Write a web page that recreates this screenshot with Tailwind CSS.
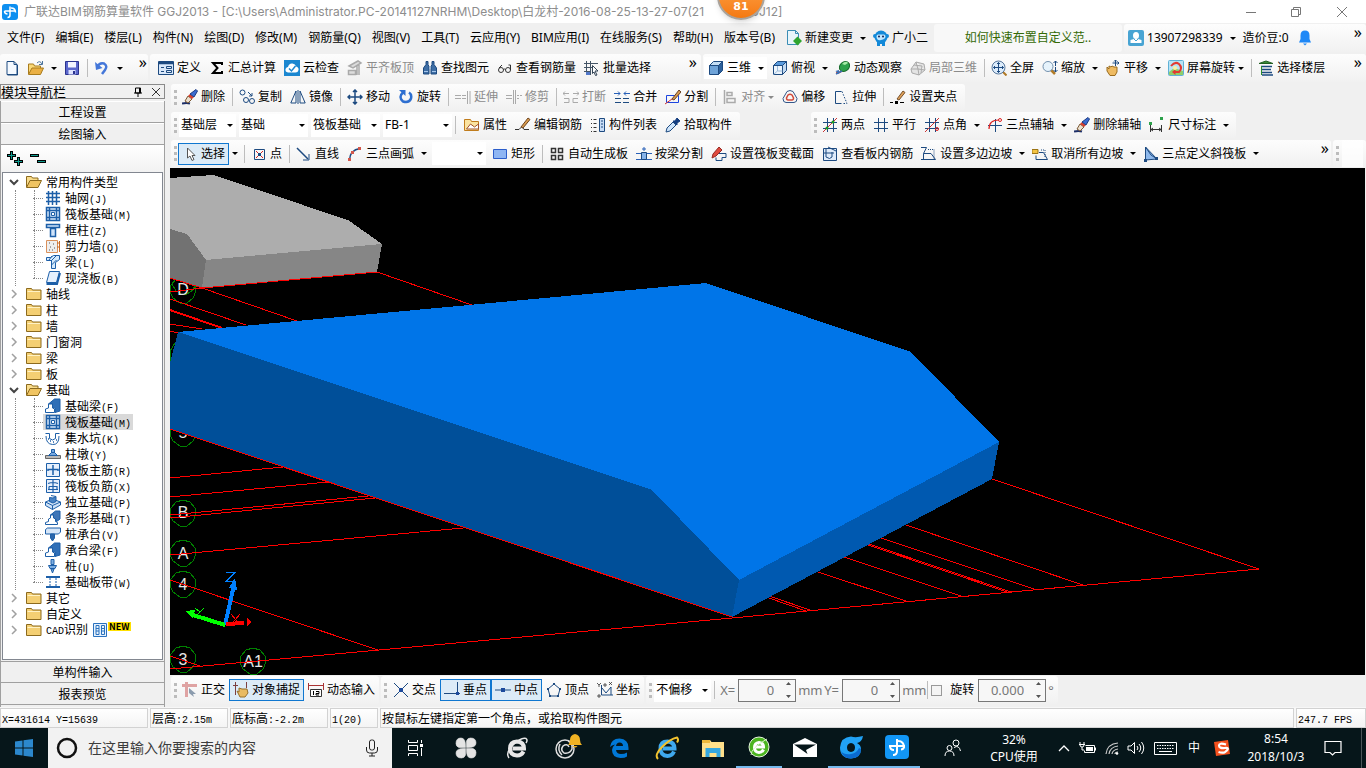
<!DOCTYPE html>
<html lang="zh-CN">
<head>
<meta charset="utf-8">
<title>广联达BIM钢筋算量软件 GGJ2013</title>
<script src="https://cdn.jsdelivr.net/npm/@tailwindcss/browser@4"></script>
</head>
<body class="flex h-screen flex-col overflow-hidden bg-[#f0f0f0] font-['Noto_Sans','Noto_Sans_CJK_SC',sans-serif] text-[12px] leading-4 text-black
 [&_svg]:shrink-0 [&_button]:whitespace-nowrap
 [&_.tb]:flex [&_.tb]:items-center [&_.tb]:rounded-[3px] [&_.tb]:bg-linear-to-b [&_.tb]:from-[#fdfdfd] [&_.tb]:to-[#f1f1f1]
 [&_.tb_button]:flex [&_.tb_button]:h-[22px] [&_.tb_button]:shrink-0 [&_.tb_button]:items-center [&_.tb_button]:gap-[3px] [&_.tb_button]:px-1
 [&_.tb_svg]:size-4 [&_.tb_svg]:fill-none [&_.tb_svg]:stroke-[#1d4a80]
 [&_.tb_i]:size-0 [&_.tb_i]:border-x-[3px] [&_.tb_i]:border-t-[3px] [&_.tb_i]:border-x-transparent [&_.tb_i]:border-t-current
 [&_.tb>hr]:mr-0.5 [&_.tb>hr]:ml-[3px] [&_.tb>hr]:h-[18px] [&_.tb>hr]:w-px [&_.tb>hr]:shrink-0 [&_.tb>hr]:border-0 [&_.tb>hr]:bg-[#bdbdbd]
 [&_.grip]:mr-px [&_.grip]:ml-[3px] [&_.grip]:h-[15px] [&_.grip]:shrink-0 [&_.grip]:border-l-[3px] [&_.grip]:border-dotted [&_.grip]:border-[#bcbcbc]
 [&_.combo]:mr-[3px] [&_.combo]:flex [&_.combo]:h-[23px] [&_.combo]:shrink-0 [&_.combo]:items-center [&_.combo]:bg-white [&_.combo]:pr-[3px]
 [&_.combo_select]:min-w-0 [&_.combo_select]:flex-1 [&_.combo_select]:appearance-none [&_.combo_select]:pl-0.5
 [&_.mono]:font-['Liberation_Mono',monospace] [&_.mono]:text-[10px]">

<!-- title bar -->
<header class="relative flex h-[23px] shrink-0 items-center bg-white pl-0.5">
  <svg viewBox="0 0 16 16" class="size-4"><rect width="16" height="16" rx="3" fill="#0d8ff0"/><path d="M8 2.500v8.500q0 2.500-2.500 2.500M2.500 7h11M9 4q4.500 0 4.500 4.500M2.500 7q0 3 3 3" fill="none" stroke="#fff" stroke-width="1.500"/></svg>
  <h1 class="ml-1.5 flex flex-1 items-center whitespace-nowrap font-['Inter','Noto_Sans_CJK_SC',sans-serif] text-[#8d8d8d]"><span class="w-[692px] shrink-0 overflow-hidden">广联达BIM钢筋算量软件 GGJ2013 - [C:\Users\Administrator.PC-20141127NRHM\Desktop\白龙村-2016-08-25-13-27-07(21</span><span class="ml-auto w-[488px] shrink"><span class="pl-px">GGJ12]</span></span></h1>
  <div class="absolute -top-7 left-[717px] flex size-12 items-end justify-center rounded-full border-2 border-[#a9a39c] bg-linear-to-b from-[#ffab4a] to-[#f5790f] pb-[3px] font-['DejaVu_Sans'] text-[11px] font-bold text-white shadow-md">81</div>
  <div class="flex [&_svg]:size-3 [&_svg]:fill-none [&_svg]:stroke-[#777]">
    <button aria-label="最小化" class="flex h-5 w-[45px] items-center justify-center"><svg viewBox="0 0 12 12"><path d="M1 6.500h10"/></svg></button>
    <button aria-label="还原" class="flex h-5 w-[45px] items-center justify-center"><svg viewBox="0 0 12 12"><path d="M1.500 3.500h7v7h-7zM3.500 3.500v-2h7v7h-2"/></svg></button>
    <button aria-label="关闭" class="flex h-5 w-[48px] items-center justify-center"><svg viewBox="0 0 12 12"><path d="M1 1l10 10M11 1L1 11"/></svg></button>
  </div>
</header>

<!-- menu bar -->
<div class="flex h-[30px] shrink-0 gap-0.5 py-px">
  <nav class="flex items-center gap-[11px] pl-[7px] whitespace-nowrap">
    <button>文件(F)</button><button>编辑(E)</button><button>楼层(L)</button><button>构件(N)</button><button>绘图(D)</button><button>修改(M)</button><button>钢筋量(Q)</button><button>视图(V)</button><button>工具(T)</button><button>云应用(Y)</button><button>BIM应用(I)</button><button>在线服务(S)</button><button>帮助(H)</button><button>版本号(B)</button>
    <button class="flex items-center gap-[3px]"><svg viewBox="0 0 16 16" class="size-4"><path d="M1.500.5h8l3 3v11h-11z" fill="#e8f5fb" stroke="#3a8db5"/><path d="M9.500.5v3h3" fill="none" stroke="#3a8db5"/><path d="M11.500 6.500L16 11l-4.500 4.500L7 11z" fill="#2fa52f"/></svg>新建变更<span class="ml-1 size-0 border-x-[3px] border-t-[3px] border-x-transparent border-t-black"></span></button>
    <button class="-ml-1 flex items-center gap-[3px]"><svg viewBox="0 0 16 16" class="size-4"><circle cx="8" cy="7" r="6.500" fill="#1389d8"/><circle cx="2" cy="6" r="2" fill="#1389d8"/><circle cx="14" cy="6" r="2" fill="#1389d8"/><path d="M4 11h8v5H9v-2H7v2H4z" fill="#1389d8"/><path d="M3.500 6.500q0-2.500 2.500-2h4q2.500-.5 2.500 2t-4.500 3.500-4.500-3.500z" fill="#bfe6ff"/><circle cx="6" cy="6.500" r="1" fill="#125"/><circle cx="10" cy="6.500" r="1" fill="#125"/></svg>广小二</button>
  </nav>
  <a href="#" class="ml-1 flex w-[188px] shrink-0 items-center justify-center rounded-[3px] bg-[#f8f8f8] text-[#356a06]">如何快速布置自定义范..</a>
  <div class="tb min-w-0 flex-1">
    <button><svg viewBox="0 0 16 16"><rect width="16" height="16" rx="2" fill="#48a4d3" stroke="none"/><ellipse cx="8" cy="5.500" rx="3" ry="3.500" fill="#fff" stroke="none"/><path d="M2.500 13v-3L6 9h4l3.500 1v3z" fill="#fff" stroke="none"/><path d="M6 9l2 2 2-2" stroke="#48a4d3"/></svg>13907298339</button>
    <button class="w-3 justify-center px-0!" aria-label="账户菜单"><i></i></button>
    <button>造价豆:0</button>
    <button aria-label="通知"><svg viewBox="0 0 16 16"><path d="M8 .5q-4.500 0-4.500 5V9L2 12.500h12L12.500 9V5.500q0-5-4.500-5zM6 13.500h4L8 15.500z" fill="#1e88f7" stroke="none"/></svg></button>
    <button class="ml-auto pb-3! text-[16px]">»</button>
  </div>
</div>

<!-- main toolbar -->
<div class="flex h-[31px] shrink-0 gap-0.5 pt-px pb-0.5">
  <div class="tb w-[148px] shrink-0">
    <button class="w-6" aria-label="新建"><svg viewBox="0 0 16 16"><path d="M3 1.500h7l3 3v10H3z" fill="#f4f9ff"/><path d="M10 1.500v3h3M13.500 5v10H3.500"/></svg></button>
    <button class="w-6" aria-label="打开"><svg viewBox="0 0 16 16"><path d="M.5 14V4h5l1 2h6v2" fill="#f9d878" stroke="#a87b1c"/><path d="M.5 14.500L4 8h11.500l-3 6.500z" fill="#eab044" stroke="#a87b1c"/><path d="M9 3q3-3 5 1m.5-3v3.500H11" stroke="#4a739c"/></svg></button>
    <button class="w-3 justify-center px-0!" aria-label="打开菜单"><i></i></button>
    <button class="w-6" aria-label="保存"><svg viewBox="0 0 16 16"><path d="M1.500 1.500h13v13h-13z" fill="#5b67cc" stroke="#2b338f"/><path d="M4 2h8v5.500H4z" fill="#f3f5ff" stroke="none"/><path d="M4.500 10h7v4.500h-7z" fill="#dfe4ff" stroke="none"/><path d="M9 11h2v3H9z" fill="#2b338f" stroke="none"/></svg></button>
    <hr>
    <button class="w-6" aria-label="撤销"><svg viewBox="0 0 16 16"><path d="M3 7q3-5 7-3.500 4 2.500 1 6.500l-3 4" stroke="#4477d9" stroke-width="2.500"/><path d="M1 2l1 8 6.500-2z" fill="#4477d9" stroke="none"/></svg></button>
    <button class="w-3 justify-center px-0!" aria-label="撤销菜单"><i></i></button>
    <button class="ml-auto px-px! pb-3! text-[16px]">»</button>
  </div>
  <div class="tb w-[551px] shrink-0 pl-1">
    <button><svg viewBox="0 0 16 16"><path d="M.5 1.500h15v13H.5z" fill="#d9e8fa"/><path d="M1 3h14" stroke-width="2.500"/><path d="M3 7.500h3M3 11.500h3M8.500 6.500h5v2h-5zM8.500 10.500h5v2h-5z"/></svg>定义</button>
    <button><svg viewBox="0 0 16 16"><path d="M13 5V3H4l4.500 5L4 13h9v-2" stroke="#000" stroke-width="2"/></svg>汇总计算</button>
    <button><svg viewBox="0 0 16 16"><rect width="16" height="16" fill="#1b87d0" stroke="none"/><path d="M4 12.500q-3-.5-2.500-3.500 1-2 2.500-2 1-4 4.500-3.500 3 .5 3.500 3 3 1 2.500 3.500t-3 2.500z" fill="#fff" stroke="none"/><path d="M5 8.500l2.500 2.500L11.500 6" stroke="#1b87d0" stroke-width="1.500"/></svg>云检查</button>
    <button class="text-[#8b8b8b]"><svg viewBox="0 0 16 16"><path d="M2 6l9-5 3 2-8 5zM1.500 10.500h7v4h-7zM10 5v10M12 5v10" stroke="#aaa" fill="#ddd" stroke-width="1.500"/></svg>平齐板顶</button>
    <button><svg viewBox="0 0 16 16"><path d="M4 1.500h2v3l1 2V14H1.500V8L4 4.500zM10 1.500h2v3L14.500 8v6H9V6.500l1-2z" fill="#3e6ea5"/><path d="M7 8h2M2 11.500h4M10 11.500h4" stroke="#a7c7ec"/></svg>查找图元</button>
    <button><svg viewBox="0 0 16 16"><circle cx="4" cy="10" r="2.500" stroke="#333"/><circle cx="11" cy="10" r="2.500" stroke="#333"/><path d="M6.500 9.500q1-1 2 0M2 8l3-3M13.500 10V5h-2" stroke="#333"/></svg>查看钢筋量</button>
    <button><svg viewBox="0 0 16 16"><path d="M2.500 1v14M6.500 1v14M0 3.500h14M0 7.500h8M0 11.500h7" stroke="#456"/><path d="M8.500 5.500l5.500 5.500h-3l2 4-1.500.5L10 12l-1.500 1.500z" fill="#fff" stroke="#345"/><path d="M2 12h4v3H2z" fill="#5177c8" stroke="none"/></svg>批量选择</button>
    <button class="ml-auto pb-3! text-[16px]">»</button>
  </div>
  <div class="tb min-w-0 flex-1 pl-px">
    <span class="mr-px flex bg-white"><button><svg viewBox="0 0 16 16"><path d="M1.500 5.500h9v9h-9z" fill="#6ea3d8"/><path d="M1.500 5.500l4-4h9l-4 4z" fill="#c4def5"/><path d="M10.500 5.500l4-4v9l-4 4z" fill="#2d619c"/></svg>三维</button><button class="w-3 justify-center px-0!" aria-label="三维菜单"><i></i></button></span>
    <button><svg viewBox="0 0 16 16"><path d="M1.500 5.500h9v9h-9z" fill="#edf5fd"/><path d="M1.500 5.500l4-4h9l-4 4z" fill="#5a9bdc"/><path d="M10.500 5.500l4-4v9l-4 4z" fill="#c2daf2"/><path d="M5.500 6v5h5m-5 0l-4 3.500" stroke="#9bbad9"/></svg>俯视</button><button class="w-3 justify-center px-0!" aria-label="俯视菜单"><i></i></button>
    <button><svg viewBox="0 0 16 16"><path d="M1 13q7 0 13-10" stroke="#c43b2b" stroke-width="1.500"/><ellipse cx="9.500" cy="6.500" rx="5.500" ry="4.500" transform="rotate(-40 9.500 6.500)" fill="#2da14b" stroke="#176b2c"/><path d="M7 4q4-4 6-1l-3 2z" fill="#a5eaa6" stroke="none"/><path d="M1 14l6-3" stroke="#3b6fb5" stroke-width="1.500"/><path d="M.5 11l3.500-1v4z" fill="#3b6fb5" stroke="none"/></svg>动态观察</button>
    <button class="text-[#8b8b8b]"><svg viewBox="0 0 16 16"><path d="M1 9l5-7 8 2 1 6-6 5-7-2zM6 2l2 7 7 1M8 9l1 6M1 9h7M4 5l8 1-1 7" fill="#e4e4e4" stroke="#aaa"/></svg>局部三维</button>
    <hr>
    <button><svg viewBox="0 0 16 16"><path d="M12 12l3.500 3.500" stroke="#b07a28" stroke-width="2"/><circle cx="7.500" cy="7.500" r="6.500" fill="#dcecfb" stroke="#57779c"/><path d="M7.500 2.500v10M2.500 7.500h10M6 4l1.500-1.500L9 4M6 11l1.500 1.500L9 11M4 6L2.500 7.500 4 9M11 6l1.500 1.500L11 9"/></svg>全屏</button>
    <button><svg viewBox="0 0 16 16"><path d="M9 10l4 4" stroke="#b07a28" stroke-width="2.500"/><circle cx="6" cy="6.500" r="5" fill="#e6f3fc" stroke="#7391ae"/><path d="M13.500 1v5M11.500 3l2-2 2 2M13.500 7v5M11.500 10l2 2 2-2"/></svg>缩放</button><button class="w-3 justify-center px-0!" aria-label="缩放菜单"><i></i></button>
    <button><svg viewBox="0 0 16 16"><path d="M2 7l2 2V6l2 1 1-1 2 1h3v5l-2 3.500H5L2 11z" fill="#efbb62" stroke="#9a6c1f"/><path d="M10.500 0v6M7.500 3h6M9 1.500L10.500 0 12 1.500M12.500 1.500L14 3l-1.500 1.500"/></svg>平移</button><button class="w-3 justify-center px-0!" aria-label="平移菜单"><i></i></button>
    <button><svg viewBox="0 0 16 16"><rect x=".5" y=".5" width="15" height="15" rx="1" fill="#b9e3f5" stroke="#5fb1d6"/><path d="M1 12l5-4 9 3v4H1z" fill="#8fcf6b" stroke="none"/><path d="M3 6q4-5 8-2 4 4 0 8H6" stroke="#e33a32" stroke-width="2"/><path d="M7.500 9v6L4 12z" fill="#e33a32" stroke="none"/><circle cx="7" cy="8" r="2" fill="#fff0a0" stroke="none"/></svg>屏幕旋转<i></i></button>
    <hr>
    <button><svg viewBox="0 0 16 16"><path d="M1 3.500l7-2.500 7 2.500z" fill="#3a8b3a" stroke="#225f22"/><path d="M3 6.500h11M3 9.500h10M3 12.500h11M4 15h11" stroke-width="1.500"/><path d="M3.500 6v9" stroke="#2c8f2c"/></svg>选择楼层</button>
    <button class="ml-auto pb-3! text-[16px]">»</button>
  </div>
</div>

<main class="flex min-h-0 flex-1">
  <!-- module navigation -->
  <aside class="flex w-[165px] shrink-0 flex-col font-['Noto_Sans_CJK_SC',sans-serif]">
    <div class="flex h-[15px] items-center border border-[#8a8a8a]">
      <h2 class="flex-1 text-[13px] leading-[13px]">模块导航栏</h2>
      <button aria-label="固定" class="mr-2"><svg viewBox="0 0 10 10" class="size-2.5"><path d="M2.500 1h5v5h-5zM6.500 1v5M1 6h8M5 6v4" fill="none" stroke="#000"/></svg></button>
      <button aria-label="关闭导航栏" class="mr-[3px]"><svg viewBox="0 0 10 10" class="size-2.5"><path d="M1 1l8 8M9 1L1 9" fill="none" stroke="#333"/></svg></button>
    </div>
    <div class="mt-0.5 flex min-h-0 flex-1 flex-col border-r border-l border-[#a0a0a0]">
      <button class="h-[22px] shrink-0 border-y border-t-white border-b-[#a0a0a0]">工程设置</button>
      <button class="h-[22px] shrink-0 border-y border-t-white border-b-[#a0a0a0]">绘图输入</button>
      <div class="flex h-[27px] shrink-0 items-center gap-1.5 bg-linear-to-b from-white to-[#f2f2f2] pl-1.5">
        <button aria-label="全部展开"><svg viewBox="0 0 17 16" class="h-4 w-[17px]"><path d="M4.500 0v9M0 4.500h9M11.500 6v9M7 10.500h9" fill="none" stroke="#000" stroke-width="3"/><path d="M4.500 1v7M1 4.500h7M11.500 7v7M8 10.500h7" fill="none" stroke="#0f9b8e"/></svg></button>
        <button aria-label="全部折叠"><svg viewBox="0 0 17 16" class="h-4 w-[17px]"><path d="M0 4.500h9M7 10.500h9" fill="none" stroke="#000" stroke-width="3"/><path d="M1 4.500h7M8 10.500h7" fill="none" stroke="#0f9b8e"/></svg></button>
      </div>
      <ul class="mx-px min-h-0 flex-1 overflow-hidden border border-[#828790] bg-white pt-px
        [&_svg]:size-4 [&_svg]:fill-none
        [&>li>div]:flex [&>li>div]:h-4 [&>li>div]:items-center [&>li>div]:gap-1 [&>li>div]:pl-[5px]
        [&_ul]:relative [&_ul]:pl-[30px]
        [&_ul]:before:absolute [&_ul]:before:top-0 [&_ul]:before:bottom-0 [&_ul]:before:left-[12px] [&_ul]:before:border-l [&_ul]:before:border-dotted [&_ul]:before:border-[#888]
        [&_ul]:after:absolute [&_ul]:after:top-0 [&_ul]:after:bottom-2 [&_ul]:after:left-[31px] [&_ul]:after:border-l [&_ul]:after:border-dotted [&_ul]:after:border-[#888]
        [&_li_li]:flex [&_li_li]:h-4 [&_li_li]:items-center
        [&_li_li]:before:w-[10px] [&_li_li]:before:border-t [&_li_li]:before:border-dotted [&_li_li]:before:border-[#888]
        [&_li_li>span]:h-4 [&_li_li>span]:px-0.5 [&_li_li>span]:leading-4 [&_li_li>span]:whitespace-nowrap
        [&_li_li_svg]:mr-1 [&_li_li_svg]:inline-block [&_li_li_svg]:align-top [&_li_li_svg]:stroke-[#1d5fa8]
        [&_.ex]:mr-0.5 [&_.ex]:size-3!">
        <li><div><svg class="ex" viewBox="0 0 12 12"><path d="M2 4l4 4 4-4" stroke="#444" stroke-width="2"/></svg><svg viewBox="0 0 16 16"><use href="#fo"/></svg>常用构件类型</div>
          <ul>
            <li><span><svg viewBox="0 0 16 16"><path d="M3.500 1v14M7.500 1v14M11.500 1v14M1 3.500h14M1 7.500h14M1 11.500h14" stroke-width="1.500"/></svg>轴网<b class="mono font-normal">(J)</b></span></li>
            <li><span><svg viewBox="0 0 16 16"><use href="#raft"/></svg>筏板基础<b class="mono font-normal">(M)</b></span></li>
            <li><span><svg viewBox="0 0 16 16"><path d="M1.500 2.500h13v3h-13zM5.500 6.500h5v8h-5z" fill="#cfe3fa" stroke-width="1.500"/></svg>框柱<b class="mono font-normal">(Z)</b></span></li>
            <li><span><svg viewBox="0 0 16 16"><path d="M1.500 2.500h11v12h-11z" fill="#eee" stroke="#d9905a"/><path d="M4 5h1M8 6h1M5 9h1M9 10h1M4 12h1M7 12h1" stroke="#555"/><path d="M14.500 3v11M12 5h3M12 9h3" stroke="#c66a28"/></svg>剪力墙<b class="mono font-normal">(Q)</b></span></li>
            <li><span><svg viewBox="0 0 16 16"><path d="M1.500 3.500h4l3-2h6v4l-4 3v6h-4v-8l-5 0z" fill="#d5eafc"/><path d="M6 7l5-5M6.500 11l5-5M4 6l3-4"/></svg>梁<b class="mono font-normal">(L)</b></span></li>
            <li><span><svg viewBox="0 0 16 16"><path d="M4.500 1.500h10l-3 11h-10z" fill="#e5f0fd"/><path d="M1.500 14h10.500l3-11" stroke-width="2"/></svg>现浇板<b class="mono font-normal">(B)</b></span></li>
          </ul></li>
        <li><div><svg class="ex" viewBox="0 0 12 12"><use href="#cl"/></svg><svg viewBox="0 0 16 16"><use href="#fc"/></svg>轴线</div></li>
        <li><div><svg class="ex" viewBox="0 0 12 12"><use href="#cl"/></svg><svg viewBox="0 0 16 16"><use href="#fc"/></svg>柱</div></li>
        <li><div><svg class="ex" viewBox="0 0 12 12"><use href="#cl"/></svg><svg viewBox="0 0 16 16"><use href="#fc"/></svg>墙</div></li>
        <li><div><svg class="ex" viewBox="0 0 12 12"><use href="#cl"/></svg><svg viewBox="0 0 16 16"><use href="#fc"/></svg>门窗洞</div></li>
        <li><div><svg class="ex" viewBox="0 0 12 12"><use href="#cl"/></svg><svg viewBox="0 0 16 16"><use href="#fc"/></svg>梁</div></li>
        <li><div><svg class="ex" viewBox="0 0 12 12"><use href="#cl"/></svg><svg viewBox="0 0 16 16"><use href="#fc"/></svg>板</div></li>
        <li><div><svg class="ex" viewBox="0 0 12 12"><path d="M2 4l4 4 4-4" stroke="#444" stroke-width="2"/></svg><svg viewBox="0 0 16 16"><use href="#fo"/></svg>基础</div>
          <ul>
            <li><span><svg viewBox="0 0 16 16"><use href="#beam"/></svg>基础梁<b class="mono font-normal">(F)</b></span></li>
            <li><span class="bg-[#d9d9d9]"><svg viewBox="0 0 16 16"><use href="#raft"/></svg>筏板基础<b class="mono font-normal">(M)</b></span></li>
            <li><span><svg viewBox="0 0 16 16"><path d="M.5 3.500h4v5q3 3 6 0v-5h4M1 6q0 8 6.500 8.500T14 6"/><path d="M5 11h1M8 12h1M11 10h1M3 9h1" stroke-width="1.500"/></svg>集水坑<b class="mono font-normal">(K)</b></span></li>
            <li><span><svg viewBox="0 0 16 16"><path d="M.5 9.500h15v3H.5z" fill="#b9b9b9" stroke="#666"/><path d="M3.500 9.500l3-3h3l3 3zM6.500 3.500h3v3h-3z" fill="#78a9e0"/></svg>柱墩<b class="mono font-normal">(Y)</b></span></li>
            <li><span><svg viewBox="0 0 16 16"><path d="M1.500 1.500h13v13h-13z" fill="#e7f0fc"/><path d="M8 3v10M3 9V7.500h10V9" stroke-width="1.500"/></svg>筏板主筋<b class="mono font-normal">(R)</b></span></li>
            <li><span><svg viewBox="0 0 16 16"><path d="M1.500 1.500h13v13h-13z" fill="#e7f0fc"/><path d="M8 2v12M3 5.500q5-2 10 0M4 8.500h8v3M4 11.500v-3M3 11.500h10" stroke-width="1.200"/></svg>筏板负筋<b class="mono font-normal">(X)</b></span></li>
            <li><span><svg viewBox="0 0 16 16"><path d="M.5 8l7-3 8 3v3l-8 4.500-7-4z" fill="#cfe2f7"/><path d="M.5 8l7 3.500 8-3.500M7.500 11.500v4"/><path d="M4.500 3.500v4L8 9l3-1.500v-5L8 4zM6 1.500l5 1" fill="#4883c4"/></svg>独立基础<b class="mono font-normal">(P)</b></span></li>
            <li><span><svg viewBox="0 0 16 16"><path d="M5.500 5l5-4H15v8l-4 3V9L8.500 8V5z" fill="#3f76b8"/><path d="M.5 14.500v-2l3-1V9l2-1V5h3v3l2 1v2.500l2 1v2z" fill="#fff"/></svg>条形基础<b class="mono font-normal">(T)</b></span></li>
            <li><span><svg viewBox="0 0 16 16"><path d="M.5 3.500l2-1.500h13v4l-2 2H.5z" fill="#d6e6f8"/><path d="M5.500 8v4L7.500 15l2-3V8z" fill="#2c66ab"/></svg>桩承台<b class="mono font-normal">(V)</b></span></li>
            <li><span><svg viewBox="0 0 16 16"><use href="#beam"/></svg>承台梁<b class="mono font-normal">(F)</b></span></li>
            <li><span><svg viewBox="0 0 16 16"><path d="M6 1.500h3v5H6zM3.500 7.500h8l-1.500 3H5zM6 11h3l-1.500 4z" fill="#7cadE0"/></svg>桩<b class="mono font-normal">(U)</b></span></li>
            <li><span><svg viewBox="0 0 16 16"><path d="M1 3h14M1 13h14" stroke-width="2"/><path d="M5 4v8M11 4v8" stroke-dasharray="2 1"/></svg>基础板带<b class="mono font-normal">(W)</b></span></li>
          </ul></li>
        <li><div><svg class="ex" viewBox="0 0 12 12"><use href="#cl"/></svg><svg viewBox="0 0 16 16"><use href="#fc"/></svg>其它</div></li>
        <li><div><svg class="ex" viewBox="0 0 12 12"><use href="#cl"/></svg><svg viewBox="0 0 16 16"><use href="#fc"/></svg>自定义</div></li>
        <li><div><svg class="ex" viewBox="0 0 12 12"><use href="#cl"/></svg><svg viewBox="0 0 16 16"><use href="#fc"/></svg><span><span class="mono">CAD</span>识别</span><svg viewBox="0 0 16 16"><path d="M1.500 1.500h13v13h-13z" fill="#e7f2fd" stroke="#2b72be"/><path d="M4 3.500h3v9H4zM9.500 3.500h3v9h-3zM4 6.500h3M4 9h3M9.500 6.500h3M9.500 9h3" stroke="#2b72be"/></svg><em class="-ml-1 self-start bg-[#ffe000] px-px text-[9px] leading-[9px] font-bold not-italic">NEW</em></div></li>
      </ul>
      <button class="mt-px h-[22px] shrink-0 border-y border-t-[#a0a0a0] border-b-[#a0a0a0]">单构件输入</button>
      <button class="mb-[2px] h-[22px] shrink-0 border-b border-[#a0a0a0]">报表预览</button>
    </div>
  </aside>

  <section class="flex min-w-0 flex-1 flex-col">
    <!-- edit toolbar -->
    <div class="flex h-7 shrink-0 pb-0.5 pl-1.5">
      <div class="tb pr-1">
        <span class="grip"></span>
        <button><svg viewBox="0 0 16 16"><use href="#brush"/></svg>删除</button><hr>
        <button><svg viewBox="0 0 16 16"><circle cx="3.500" cy="3.500" r="2.500"/><circle cx="7" cy="11" r="2.500"/><circle cx="13" cy="12" r="2.500"/><path d="M9 3l4 4M13 4v3h-3"/></svg>复制</button>
        <button><svg viewBox="0 0 16 16"><path d="M6 2v12H.8zM10 2v12h5.200zM8 1v14" /></svg>镜像</button><hr>
        <button><svg viewBox="0 0 16 16"><path d="M8 1v14M1 8h14M6 3l2-2 2 2M6 13l2 2 2-2M3 6L1 8l2 2M13 6l2 2-2 2" stroke-width="1.500"/></svg>移动</button>
        <button><svg viewBox="0 0 16 16"><path d="M5 3.500Q0 8 5 12.500q6 2 8-3 1-4-2-6" stroke="#2e6fd0" stroke-width="2.500"/><path d="M1 1h6.500v6z" fill="#2e6fd0" stroke="none"/></svg>旋转</button><hr>
        <button class="text-[#8b8b8b]"><svg viewBox="0 0 16 16"><path d="M0 6.500h6M0 9.500h6M7 6.500h4M7 9.500h4M12.500 2v13M15 2v13" stroke="#aaa"/></svg>延伸</button>
        <button class="text-[#8b8b8b]"><svg viewBox="0 0 16 16"><path d="M0 6.500h6M0 9.500h6M7.500 1v14M9.500 1v14M11 6.500h2M14 6.500h2M11 9.500h2" stroke="#aaa"/></svg>修剪</button><hr>
        <button class="text-[#8b8b8b]"><svg viewBox="0 0 16 16"><path d="M0 4.500h6M2 2.500l-2 2 2 2M10 4.500h6M14 2.500l2 2-2 2M1 9.500h5v4H1M15 9.500h-5v4h5" stroke="#aaa"/></svg>打断</button>
        <button><svg viewBox="0 0 16 16"><path d="M0 4.500h6M4 2.500l2 2-2 2M16 4.500h-6M12 2.500l-2 2 2 2" stroke="#2860b8"/><path d="M1 9.500h6M1 13.500h6M9 9.500h6M9 13.500h6"/></svg>合并</button>
        <button><svg viewBox="0 0 16 16"><path d="M1.500 6.500h12v7h-12z" stroke="#1c45e0"/><path d="M0 15L14 5" stroke="#c33"/><path d="M7 10l7-9 2 2-7 8z" fill="#d79a52" stroke="#6b4424"/></svg>分割</button><hr>
        <button class="text-[#8b8b8b]"><svg viewBox="0 0 16 16"><path d="M2.500 1v14M5 3.500h5v3H5zM5 9.500h8v4H5z" stroke="#aaa" stroke-width="1.500"/></svg>对齐<i></i></button>
        <button><svg viewBox="0 0 16 16"><path d="M5 2.500q3-2 6 0l4 7q0 4-3 4H4q-3 0-3-4z" stroke="#33578a"/><path d="M6 6q2-1.500 4 0l1.500 3q0 2-1.500 2H6q-1.500 0-1.500-2z" stroke="#d24a3b" stroke-width="1.500"/></svg>偏移</button>
        <button><svg viewBox="0 0 16 16"><path d="M8.500 14.500h-6v-12h6"/><path d="M9 2.500l5 12H9" stroke-dasharray="1.500 1.500"/></svg>拉伸</button><hr>
        <button><svg viewBox="0 0 16 16"><path d="M0 13.500h3M10 13.500h4" stroke="#000"/><path d="M5 12h3v3H5z" fill="#000" stroke="none"/><path d="M7 10l6-8 2 1.500L9 11z" fill="#e0a25a" stroke="#75502c"/></svg>设置夹点</button>
      </div>
    </div>
    <!-- component and axis toolbar -->
    <div class="flex h-7 shrink-0 pb-0.5 pl-1.5">
      <div class="tb mr-[71px] pr-1">
        <span class="grip mr-0.5!"></span>
        <label class="combo w-[57px]"><select aria-label="楼层"><option>基础层</option></select><i></i></label>
        <label class="combo w-[69px]"><select aria-label="构件大类"><option>基础</option></select><i></i></label>
        <label class="combo w-[69px]"><select aria-label="构件类型"><option>筏板基础</option></select><i></i></label>
        <label class="combo mr-0! w-[69px]"><select aria-label="构件"><option>FB-1</option></select><i></i></label><hr class="mr-1!">
        <button><svg viewBox="0 0 16 16"><path d="M.5 2.500h6l1 2h7v9H.5z" fill="#fbe3a0" stroke="#c07c1c"/><path d="M2.500 12l4-5 4 3 4-3v5z" fill="#fff" stroke="#a0522d"/></svg>属性</button>
        <button><svg viewBox="0 0 16 16"><path d="M0 12.500h4l3-3 2 3h5" stroke="#333"/><path d="M6 10l7-9 2 1.500L8 11z" fill="#d99c4f" stroke="#6e4520"/></svg>编辑钢筋</button>
        <button><svg viewBox="0 0 16 16"><path d="M1 2.500h1M1 6.500h1M1 10.500h1M1 14.500h1M3.500 2.500h3M3.500 6.500h3M3.500 10.500h3M3.500 14.500h3" stroke="#333"/><path d="M9.500 1.500h5v13h-5z" fill="#c8dcf5"/><path d="M11 4h2M11 7h2M11 10h2"/></svg>构件列表</button>
        <button><svg viewBox="0 0 16 16"><path d="M1 15l1-4 6-6 3 3-6 6z" fill="#cfe5fb"/><path d="M8 4h2l2-3 3 3-3 2v2z" fill="#153e80" stroke="#153e80"/></svg>拾取构件</button>
      </div>
      <div class="tb pr-1">
        <span class="grip"></span>
        <button><svg viewBox="0 0 16 16"><use href="#hash"/><path d="M1 15L15 1" stroke="#c33"/><circle cx="5" cy="11" r="1.500" fill="#1a9a1a" stroke="none"/><circle cx="11" cy="5" r="1.500" fill="#1a9a1a" stroke="none"/></svg>两点</button>
        <button><svg viewBox="0 0 16 16"><use href="#hash"/></svg>平行</button>
        <button><svg viewBox="0 0 16 16"><use href="#hash"/><path d="M1 15L15 1" stroke="#c33"/><circle cx="13" cy="12" r="1.500" stroke="#d22"/></svg>点角</button><button class="w-3 justify-center px-0!" aria-label="点角菜单"><i></i></button>
        <button><svg viewBox="0 0 16 16"><path d="M8.500 2v13M1 8.500h14"/><path d="M2 12q0-9 10-9" stroke="#d22" stroke-width="1.200"/><circle cx="13" cy="3" r="1.500" stroke="#d22"/></svg>三点辅轴</button><button class="w-3 justify-center px-0!" aria-label="三点辅轴菜单"><i></i></button>
        <button><svg viewBox="0 0 16 16"><use href="#brush"/></svg>删除辅轴</button>
        <button><svg viewBox="0 0 16 16"><path d="M1.500 8v7M12.500 8v7M2 12.500h10M4 11l-2 1.500L4 14M10 11l2 1.500L10 14" stroke="#333"/><path d="M0 5h3v3H0zM11 0h3v3h-3z" fill="#2da14b" stroke="none"/></svg>尺寸标注</button><button class="w-3 justify-center px-0!" aria-label="尺寸标注菜单"><i></i></button>
      </div>
    </div>
    <!-- drawing toolbar -->
    <div class="flex h-7 shrink-0 gap-0.5 pb-px pl-1.5">
      <div class="tb w-[1160px] shrink-0">
        <span class="grip"></span>
        <button class="bg-[#dcebf7] outline outline-[#0f77d0] -outline-offset-1"><svg viewBox="0 0 16 16"><path d="M5.500 2v10l2.500-2 2 4.500 2-1-2-4h3z" fill="#fff" stroke="#555"/></svg>选择</button><button class="w-3 justify-center px-0!" aria-label="选择菜单"><i></i></button><hr>
        <button><svg viewBox="0 0 16 16"><path d="M3.500 3.500h10v10h-10z"/><path d="M5 5l7 7M12 5l-7 7" stroke="#d22"/><path d="M7 7h3v3H7z" fill="#1d4a80" stroke="none"/></svg>点</button><hr>
        <button><svg viewBox="0 0 16 16"><path d="M1 2l11 11" stroke-width="1.500"/><path d="M13 8v6H7"/></svg>直线</button>
        <button><svg viewBox="0 0 16 16"><path d="M2.500 14Q3 4 13 2.500" stroke-width="1.500"/><path d="M1 12h3v3H1zM11 1h3v3h-3zM4 5h3v3H4z" fill="#d2564a" stroke="none"/></svg>三点画弧</button><button class="w-3 justify-center px-0!" aria-label="画弧菜单"><i></i></button>
        <label class="combo mx-0.5! w-[54px]"><select aria-label="画法"><option></option></select><i></i></label>
        <button><svg viewBox="0 0 16 16"><path d="M1.500 3.500h13v9h-13z" fill="#8fb6f3" stroke="#2c5ecb"/></svg>矩形</button><hr>
        <button><svg viewBox="0 0 16 16"><path d="M2.500 2.500h4v4h-4zM9.500 2.500h4v4h-4zM2.500 9.500h4v4h-4zM9.500 9.500h4v4h-4z" stroke="#333" stroke-width="1.500"/></svg>自动生成板</button>
        <button><svg viewBox="0 0 16 16"><path d="M0 7.500h5M11 7.500h5M0 13.500h16M8 1v4M6 3h4" stroke="#2860b8"/><path d="M5.500 6.500h5v7h-5z" fill="#86b3ea"/></svg>按梁分割</button>
        <button><svg viewBox="0 0 16 16"><path d="M4 7.500h11v4h-4v3H5v-3"/><path d="M1 12l1-4 6-7 3 3-6 6z" fill="#e04a3f" stroke="#962a22"/></svg>设置筏板变截面</button>
        <button><svg viewBox="0 0 16 16"><path d="M1.500 2.500h13v12h-13z" fill="#dfebfa"/><path d="M4 3v8q4 3 6 0V6M2 7h10M6 1l8 4"/></svg>查看板内钢筋</button>
        <button><svg viewBox="0 0 16 16"><path d="M0 13.500h14.500L10 7.500H2.500l3-6M0 1.500h5.500M2.500 7.500v6"/><path d="M7 3.500h6v9" stroke-dasharray="1 1"/></svg>设置多边边坡</button><button class="w-3 justify-center px-0!" aria-label="边坡菜单"><i></i></button>
        <button><svg viewBox="0 0 16 16"><path d="M0 3.500h6v4H0z" fill="#f3c444" stroke="#9c7415"/><path d="M4 9.500v4h11.500l-4-7H7"/><path d="M9 4h4v8" stroke-dasharray="1 1"/></svg>取消所有边坡</button><button class="w-3 justify-center px-0!" aria-label="取消边坡菜单"><i></i></button>
        <button><svg viewBox="0 0 16 16"><path d="M2.500 1v13L14 13zM2.500 1L8 9l6 4" fill="#8db8ec"/><path d="M1 13h3v3H1zM12 11h3v3h-3z" fill="#1d4a80" stroke="none"/></svg>三点定义斜筏板</button><button class="w-3 justify-center px-0!" aria-label="斜筏板菜单"><i></i></button>
        <button class="ml-auto px-0.5! pb-3! text-[16px]">»</button>
      </div>
      <div class="tb min-w-0 flex-1"><span class="grip"></span><span class="mr-[3px] ml-0.5 h-full flex-1 bg-white/70"></span></div>
    </div>

    <!-- 3D viewport -->
    <div class="mr-px ml-[5px] min-h-0 flex-1 bg-black">
      <svg viewBox="170 168 1195 507" preserveAspectRatio="xMinYMin slice" class="size-full" shape-rendering="crispEdges" role="img" aria-label="三维视图">
        <g fill="none" stroke="#008000">
          <path id="ring" d="M183 277l7 2 5 6 1 6-3 7-6 5-7 0-7-5-3-6 1-7 5-6z"/>
          <use href="#ring" y="143"/><use href="#ring" y="223"/><use href="#ring" y="263"/><use href="#ring" y="294"/><use href="#ring" y="369"/><use href="#ring" x="70" y="371"/>
          <path d="M172 284l4 7 5 3h6l6-4 2-5"/>
          <path d="M170 364v-13l5-8"/>
        </g>
        <g fill="#e6e6e6" font-family="Liberation Sans" font-size="16" text-anchor="middle">
          <text x="183" y="295">D</text><text x="183" y="438">5</text><text x="183" y="518">B</text><text x="183" y="559">A</text><text x="183" y="590">4</text><text x="183" y="665">3</text><text x="253" y="667">A1</text>
        </g>
        <g fill="none" stroke="#f00">
          <path d="M170 292l32-4M377 272l95 33M202 288l95 33M170 299l76 26M170 324l32 5M170 331l8 2"/>
          <path d="M170 310l52 18" stroke-width="2"/>
          <path d="M170 478l113-11M170 497l158-15M170 515l198-19M170 518l205-20M170 555l293-27M170 580l208 70M170 656l33 11M170 669l209-19L732 618l527-49L992 479"/>
          <path d="M906 525l177 60M881 538l153 51M869 544l142 48M868 545l139 47M844 557l117 39M818 572l88 29M769 596l41 14M769 598l37 13"/>
        </g>
        <path d="M170 178l43-3 135 45 34 24-176 16-19-26-17-5z" fill="#adadad"/>
        <path d="M206 260l176-16-5 28-175 16z" fill="#868686"/>
        <path d="M170 229l17 5 19 26-4 28-32-10z" fill="#727272"/>
        <path d="M170 278l32 10 175-16" fill="none" stroke="#f00"/>
        <path d="M178 332l528-49 205 69 88 90-260 138-87-90z" fill="#0075e8"/>
        <path d="M178 332l474 158 87 90-7 37L170 429v-66z" fill="#004f99"/>
        <path d="M739 580l260-138-7 37-260 138z" fill="#0059b0"/>
        <path d="M170 429l562 188" fill="none" stroke="#f00"/>
        <g fill="none">
          <path d="M225 625l9-40" stroke="#0080ff" stroke-width="4"/><path d="M226 572.500h9l-9 9h9" stroke="#0080ff"/>
          <path d="M225 625l-32-10" stroke="#0f0" stroke-width="4"/><path d="M195 608l5 4 4-4M200 612l-4 4" stroke="#0f0"/>
          <path d="M226 624l18-1" stroke="#f00" stroke-width="4"/><path d="M231 614l9 11M240 614l-9 11" stroke="#f00"/>
        </g>
        <path d="M235 578l2 12-8-2z" fill="#0080ff"/><path d="M185 611l10-1-2 8z" fill="#0f0"/><path d="M252 622l-5-4v8z" fill="#f00"/>
      </svg>
    </div>

    <!-- snap toolbar -->
    <div class="flex h-8 shrink-0 gap-0.5 pt-px pb-[3px] pl-1.5">
      <div class="tb">
        <span class="grip"></span>
        <button><svg viewBox="0 0 16 16"><path d="M0 3.500h15M4.500 0v15" stroke="#dfa3a3" stroke-width="3"/><path d="M7 6l7 6h-3l1 3-5-4z" fill="#8c9cae" stroke="none"/></svg>正交</button>
        <button class="bg-[#dcebf7] outline outline-[#0f77d0] -outline-offset-1"><svg viewBox="0 0 16 16"><path d="M2.500 0v13M0 3.500h5M13.500 0v6" stroke="#7c4040"/><path d="M4 9l2 1V6l3 1h5l1 4-3 4H7z" fill="#e9bb62" stroke="#96702c"/></svg>对象捕捉</button>
        <button><svg viewBox="0 0 16 16"><path d="M.5 1v7M15.500 1v7M1 3.500h14" stroke="#a33"/><path d="M2.500 7.500h11v7h-11z" fill="#fff" stroke="#333"/><path d="M5.500 9v4M8 9.500h3v2H8v1.500h3" stroke="#000"/></svg>动态输入</button>
      </div>
      <div class="tb">
        <span class="grip"></span>
        <button class="ml-px"><svg viewBox="0 0 16 16"><path d="M1 1l14 14M15 1L1 15"/><path d="M6 6h4v4H6z" fill="#1d4a9c" stroke="none"/></svg>交点</button>
        <button class="bg-[#dcebf7] outline outline-[#0f77d0] -outline-offset-1"><svg viewBox="0 0 16 16"><path d="M0 11.500h16M13.500 0v12"/><path d="M12 10h3v3h-3z" fill="#1d4a9c" stroke="none"/></svg>垂点</button>
        <button class="bg-[#dcebf7] outline outline-[#0f77d0] -outline-offset-1"><svg viewBox="0 0 16 16"><path d="M0 8h16"/><path d="M6 6h4v4H6z" fill="#1d4a9c" stroke="none"/></svg>中点</button>
        <button><svg viewBox="0 0 16 16"><path d="M8 2l6 5-2 7H4L2 7z"/><path d="M7 1h2v2H7zM1 6h2v2H1zM13 6h2v2h-2zM3 13h2v2H3zM11 13h2v2h-2z" fill="#1d4a80" stroke="none"/></svg>顶点</button>
        <button><svg viewBox="0 0 16 16"><path d="M4.500 3v10H16M5 6l4 5 5-6v8"/><path d="M0 1l2 2 2-2M2 3v2M12 0l3 3M15 0l-3 3M1 13h2v2H1zM7 2h2v2H7z" stroke="#333" stroke-width=".8"/></svg>坐标</button>
      </div>
      <div class="tb pr-1 text-[#777]">
        <span class="grip mr-0.5!"></span>
        <label class="combo mr-0! w-[57px] text-black"><select aria-label="偏移方式"><option>不偏移</option></select><i></i></label><hr>
        <label for="ox" class="ml-[3px] w-[18px] text-[13px]">X=</label>
        <span class="flex h-[23px] w-[58px] items-center border border-[#777] bg-[#f7f7f7] pr-1"><input id="ox" value="0" class="min-w-0 flex-1 pr-3 text-right text-[13px]"><svg viewBox="0 0 5 16" class="h-4! w-[5px]!"><path d="M0 3L2.500 0 5 3zM0 13l2.500 3L5 13z" fill="#555" stroke="none"/></svg></span>
        <span class="ml-0.5 w-[26px] text-[13px]">mm</span>
        <label for="oy" class="w-[18px] text-[13px]">Y=</label>
        <span class="flex h-[23px] w-[58px] items-center border border-[#777] bg-[#f7f7f7] pr-1"><input id="oy" value="0" class="min-w-0 flex-1 pr-3 text-right text-[13px]"><svg viewBox="0 0 5 16" class="h-4! w-[5px]!"><path d="M0 3L2.500 0 5 3zM0 13l2.500 3L5 13z" fill="#555" stroke="none"/></svg></span>
        <span class="ml-0.5 w-[22px] text-[13px]">mm</span><hr>
        <input id="rot" type="checkbox" class="ml-px size-[11px] appearance-none border border-[#999] bg-[#f4f4f4]">
        <label for="rot" class="mx-2 mr-1! text-black">旋转</label>
        <span class="flex h-[23px] w-[68px] items-center border border-[#777] bg-[#f7f7f7] pr-1"><input aria-label="旋转角度" value="0.000" class="min-w-0 flex-1 pr-3 text-right text-[13px]"><svg viewBox="0 0 5 16" class="h-4! w-[5px]!"><path d="M0 3L2.500 0 5 3zM0 13l2.500 3L5 13z" fill="#555" stroke="none"/></svg></span>
        <span class="ml-0.5 text-[13px]">°</span>
      </div>
    </div>
  </section>
</main>

<!-- status bar -->
<footer class="flex h-[21px] shrink-0 gap-0.5 bg-[#f7f7f7] pt-px whitespace-nowrap [&>div]:border [&>div]:border-[#d2d2d2] [&>div]:bg-linear-to-b [&>div]:from-white [&>div]:to-[#f4f4f4] [&>div]:pl-px [&>div]:leading-[18px] font-['Noto_Sans_CJK_SC',sans-serif]">
  <div class="w-[148px]"><span class="mono whitespace-pre">X=431614 Y=15639</span></div>
  <div class="w-[78px]">层高<span class="mono">:2.15m</span></div>
  <div class="w-[98px]">底标高<span class="mono">:-2.2m</span></div>
  <div class="w-12"><span class="mono">1(20)</span></div>
  <div class="min-w-0 flex-1">按鼠标左键指定第一个角点，或拾取构件图元</div>
  <div class="w-[70px]"><span class="mono">247.7 FPS</span></div>
</footer>

<!-- taskbar -->
<nav class="flex h-10 shrink-0 items-stretch bg-[#06161a] text-[12px] text-white [&_button]:flex [&_button]:shrink-0 [&_button]:items-center [&_button]:justify-center [&_svg]:fill-none">
  <button aria-label="开始" class="w-12"><svg viewBox="0 0 18 18" class="size-[18px]"><path d="M0 2.500L7.500 1.500V8.500H0zM8.500 1.300L18 0v8.500H8.500zM0 9.500h7.500v7L0 15.500zM8.500 9.500H18V18l-9.500-1.300z" fill="#2c88cd"/></svg></button>
  <div class="flex w-[344px] shrink-0 items-center bg-[#f2f2f2] pr-3 pl-2">
    <svg viewBox="0 0 22 22" class="size-[22px]"><circle cx="11" cy="11" r="9" stroke="#111" stroke-width="2.500"/></svg>
    <input aria-label="搜索" placeholder="在这里输入你要搜索的内容" class="ml-2.5 min-w-0 flex-1 text-[14px] placeholder:text-[#3c3c3c]">
    <svg viewBox="0 0 16 18" class="h-[18px] w-4"><rect x="5.500" y="1" width="5" height="10" rx="2" stroke="#222"/><path d="M2.500 8v3q0 3 3 3h5q3 0 3-3V8M8 14v3M5 17h6" stroke="#222"/></svg>
  </div>
  <button aria-label="任务视图" class="w-12"><svg viewBox="0 0 18 16" class="h-4 w-[18px]"><path d="M1.500 0v2.500h9V0M1.500 5.500h9v5h-9zM1.500 16v-2.500h9V16M14.500 0v3M14.500 8v8" stroke="#fff"/><path d="M13 4h3v3h-3z" fill="#fff"/></svg></button>
  <button aria-label="风扇" class="w-[51px]"><svg viewBox="0 0 22 22" class="size-[22px]"><path d="M10.500 10.500H4q-3-1-3-4Q1 1 6 1q5 0 4.500 9.500zM11.500 10.500V4q1-3 4-3 5.500 0 5.500 5 0 5-9.500 4.500zM11.500 11.500H18q3 1 3 4 0 5.500-5 5.500-5 0-4.500-9.500zM10.500 11.500V18q-1 3-4 3Q1 21 1 16q0-5 9.500-4.500z" fill="#e4e4e4" stroke="#e4e4e4" stroke-width=".6"/></svg></button>
  <button aria-label="浏览器" class="w-[51px]"><svg viewBox="0 0 22 22" class="size-[22px]"><path d="M17.500 14.500q-2 4-6.500 4-7-.5-7-7t7-7q7 .5 7 7H6.500" stroke="#e8e8e8" stroke-width="4"/><path d="M3 21Q-1 16 7 8T20 1.500Q22 3 20 6" stroke="#e8e8e8" stroke-width="1.500"/></svg></button>
  <button aria-label="漩涡" class="w-[51px]"><svg viewBox="0 0 28 26" class="-mt-1 h-[26px] w-7"><circle cx="11" cy="16" r="9" stroke="#ddd" stroke-width="1.500"/><path d="M15 14q-2-4-6-1-3 4 1 7 6 1 8-4 1-6-4-8M6 11q-3 6 2 11" stroke="#ddd" stroke-width="1.500"/><path d="M21 1q-5 1-5 6 0 3-2 5h14q-2-2-2-5 0-5-5-6zM18.500 13h5q-2.500 3-5 0z" fill="#f0b223"/></svg></button>
  <button aria-label="Edge" class="w-[51px]"><svg viewBox="0 0 22 22" class="size-[22px]"><path d="M2 10Q3 1.500 11.500 1.500 20.500 2 20.500 11v2H8q.5 4 5 4 3.500 0 6-1.500v4Q17 21 12.500 21 4 20.500 4 13q0-3 3-5.500Q3.500 8 2 10zM8 9h7q0-3.500-3.500-3.500Q8.500 5.500 8 9z" fill="#0078d7"/></svg></button>
  <button aria-label="Internet Explorer" class="w-[46px]"><svg viewBox="0 0 24 24" class="size-6"><path d="M19 15.500q-2 4.500-6.500 4.500-7-.5-7-7.500t7-7q7 .5 7 7H8" stroke="#3fa9ee" stroke-width="4"/><path d="M3 23q-4-4 4-12T22 1.500q2 2 0 5" stroke="#f2c32f" stroke-width="2"/></svg></button>
  <button aria-label="文件资源管理器" class="w-[46px]"><svg viewBox="0 0 22 20" class="h-5 w-[22px]"><path d="M0 2h8l1.500 2H22v15H0z" fill="#ffe08a"/><path d="M0 2h8v3H0z" fill="#efb93c"/><path d="M3.500 10h15v9h-4v-4h-7v4h-4z" fill="#35a7e0"/></svg></button>
  <button aria-label="安全浏览器" class="w-[46px] border-b-2 border-[#76b9ed]"><svg viewBox="0 0 22 22" class="size-[22px]"><circle cx="11" cy="11" r="10" fill="#4bb51f" stroke="#e6f5de"/><path d="M15.500 13.500q-1.500 3-4.500 3-4.500-.5-4.500-5t4.500-5q4.500.5 4.500 4.500H8" stroke="#fff" stroke-width="3"/><path d="M3 19Q3 12 19 3" stroke="#d8f3c8"/></svg></button>
  <button aria-label="邮件" class="w-[46px]"><svg viewBox="0 0 24 20" class="h-5 w-6"><path d="M0 6l12-6 12 6v13H0z" fill="#fff"/><path d="M1 6.500h22L13 12l1.500 4z" fill="#06161a"/></svg></button>
  <button aria-label="广联达" class="w-[46px] border-b-2 border-[#76b9ed]"><svg viewBox="0 0 24 24" class="size-6"><path d="M24 1q-1 6-6 7 4 2 4 6 0 9-10 9.500Q1 23 1 12.500 2 2 12 1.500q5 1.500 12-.5zM12 8q-4 .5-4 4.500t4 4.500q4-.5 4-4.500T12 8z" fill="#21a2f5" fill-rule="evenodd"/><path d="M2 16q3 4 10 3 6-1 8-6l2 1q0 9-10 9.500-8 0-10-7.500z" fill="#0a6ad0"/></svg></button>
  <button aria-label="钢筋算量" class="w-[46px] border-b-2 border-[#76b9ed]"><svg viewBox="0 0 24 24" class="size-6"><rect width="24" height="24" rx="4" fill="#1296f5"/><path d="M12 4v12q0 4-4 4M4 11h16M13 6q6 0 6 6.500-1 2-3 2M5 11q0 4 4 4" stroke="#fff" stroke-width="2"/></svg></button>
  <div class="ml-auto flex shrink-0 items-stretch">
    <button aria-label="人脉" class="w-[58px]"><svg viewBox="0 0 18 18" class="size-[18px]"><circle cx="12" cy="4" r="3" stroke="#fff"/><circle cx="5.500" cy="9" r="2.500" stroke="#fff"/><path d="M1 17q0-5 4.500-5T10 17M10 8.500q5-3 6.500 3.500" stroke="#fff"/></svg></button>
    <div class="w-16 self-center text-center leading-[17px]">32%<br>CPU使用</div>
    <button aria-label="显示隐藏的图标" class="ml-1.5 w-6"><svg viewBox="0 0 12 8" class="h-2 w-3"><path d="M1 7l5-5 5 5" stroke="#fff" stroke-width="1.300"/></svg></button>
    <button aria-label="电池" class="w-6"><svg viewBox="0 0 18 14" class="h-3.5 w-[18px]"><path d="M6.500 4.500h9v7h-10v-2M16.500 6.500v3" stroke="#fff"/><path d="M7 6h7v4H7z" fill="#fff"/><path d="M1 1v3q0 2 2 2t2-2V1M0 3.500h6M3 6v3h2" stroke="#fff"/></svg></button>
    <button aria-label="网络" class="w-6"><svg viewBox="0 0 14 14" class="size-3.5"><path d="M1 13Q2 3 13 2M4 13q1-7 9-8M7 13q.500-4 6-5M10 13q0-2 3-2" stroke="#ccc" stroke-width="1.200"/><circle cx="12" cy="12.500" r="1.300" fill="#fff"/></svg></button>
    <button aria-label="音量" class="w-6"><svg viewBox="0 0 18 14" class="h-3.5 w-[18px]"><path d="M1 5h3l3.500-3.500v11L4 9H1zM10 5q2 2 0 4M12 3q3.500 4 0 8M14.500 1q4.500 6 0 12" stroke="#fff"/></svg></button>
    <button aria-label="触摸键盘" class="w-[34px]"><svg viewBox="0 0 23 13" class="h-[13px] w-[23px]"><path d="M.5.5h22v12H.5z" stroke="#fff"/><path d="M3 3.500h17M3 6.500h17" stroke="#fff" stroke-dasharray="1.500 1"/><path d="M5 9.500h13" stroke="#fff"/></svg></button>
    <button class="w-6">中</button>
    <button aria-label="搜狗输入法" class="w-[31px]"><svg viewBox="0 0 16 16" class="size-4"><path d="M0 2l14-2 2 14-14 2z" fill="#f4511e"/><path d="M12 4.500Q5 2.500 5 5.500t6 2.500-.5 4.500q-3 .5-6-.5" stroke="#fff" stroke-width="2.200"/></svg></button>
    <div class="w-[78px] self-center text-center leading-[18px]">8:54<br>2018/10/3</div>
    <button aria-label="操作中心" class="w-9"><svg viewBox="0 0 18 18" class="size-[18px]"><path d="M1 2.500h16v11h-6L8.500 16 6 13.500H1z" stroke="#fff" stroke-width="1.200"/></svg></button>
    <span class="mr-1 ml-2.5 w-px bg-[#4b5659]"></span>
  </div>
</nav>

<!-- shared icon shapes -->
<svg class="hidden">
  <defs>
    <g id="fc"><path d="M.5 13.500v-11h5l1 1.500h8.500v9.500z" fill="#f4cf73" stroke="#8c6a1e"/><path d="M1.500 5.500H14" stroke="#fff2c4"/></g>
    <g id="fo"><path d="M.5 13V2.500h5L6.500 4H12v2" fill="#f9dc8c" stroke="#8c6a1e"/><path d="M.5 13.500L4 6.500h11.500l-3.500 7z" fill="#f0c462" stroke="#8c6a1e"/></g>
    <g id="cl"><path d="M4 2l4 4-4 4" fill="none" stroke="#a0a0a0" stroke-width="1.500"/></g>
    <g id="raft"><path d="M1.500 1.500h13v13h-13z" fill="#d8e9fb" stroke-width="1.500"/><path d="M4.500 2v12M11.500 2v12M2 4.500h12M2 11.500h12" stroke-width="1.500"/><path d="M6.500 6.500h3v3h-3z" fill="#fff"/></g>
    <g id="beam"><path d="M3.500 6l6-5H15v12l-5 1.500V10L7.500 9V6z" fill="#2f6fb7"/><path d="M.5 14.500V11l3-1V6h4v4l2 1v3.500z" fill="#fff"/></g>
    <g id="brush"><path d="M0 14.500q5-1 8 0" stroke="#1c2d66" stroke-width="2"/><path d="M3 12l3-5 4 3-4 4z" fill="#eadfcf" stroke="#7b5a35"/><path d="M6 7l2-2 4 3-2 2z" fill="#d6402f" stroke="none"/><path d="M8 5l6-4.500 1.500 1.500L12 8z" fill="#3b6cd0" stroke="#1d3a80"/></g>
    <g id="hash"><path d="M5.500 1v14M11.500 1v14M1 5.500h14M1 11.500h14"/></g>
  </defs>
</svg>
</body>
</html>
